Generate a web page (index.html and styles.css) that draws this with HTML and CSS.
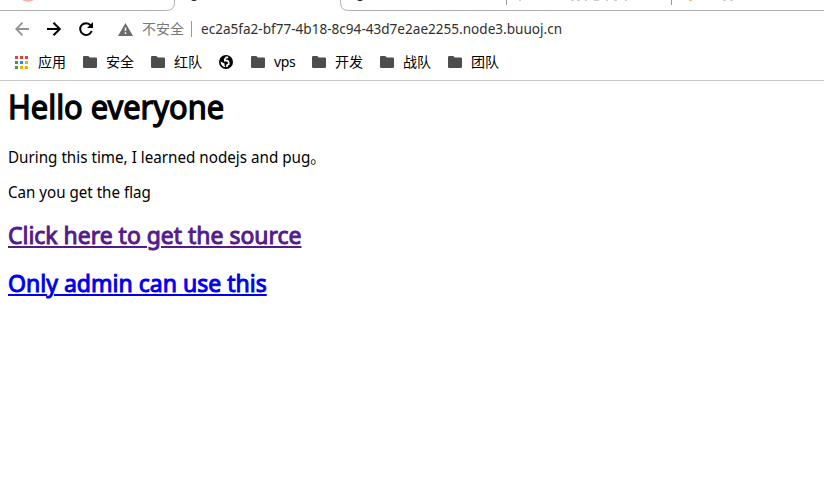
FILE: index.html
```html
<!DOCTYPE html>
<html lang="zh-CN">
<head>
<meta charset="utf-8">
<title>Hello everyone</title>
<link rel="stylesheet" href="styles.css">
</head>
<body>
<svg class="defs" width="0" height="0"><symbol id="folder" viewBox="0 0 14 12"><path d="M1.2 0H5.3L6.8 1.4H12.8Q14 1.4 14 2.6V10.8Q14 12 12.8 12H1.2Q0 12 0 10.8V1.2Q0 0 1.2 0Z" fill="#4d4d4d"/></symbol></svg>
<header class="browser">
  <svg class="tabs" width="824" height="12" viewBox="0 0 824 12">
    <path d="M0 10.5H166.500Q174.500 10.500 174.500 2.500V0M340.500 0V2.500Q340.500 10.500 348.500 10.500H824" fill="none" stroke="#b0b0b0"/>
    <path d="M506.500 0V5M671.500 0V5" stroke="#999"/>
    <path d="M22 0H34Q28 3.500 22 0Z" fill="#ffabab"/>
    <path d="M191 0H197Q194 2 191 0ZM357 0H363Q360 2 357 0Z" fill="#111"/>
    <path d="M519 .5H521M571 .5H574M577 .5H580M585 .5H587M594 .5H599M606 .5H608M614 .5H617M625 .5H627M723 .5H726M730 .5H733" stroke="#ccc"/>
    <path d="M689 .5H692" stroke="#ffc04d"/>
  </svg>
  <div class="toolbar">
    <svg class="nav back" width="14" height="14" viewBox="0 0 14 14"><path d="M14 7H1.500M7.500 .7L1.200 7L7.500 13.300"/></svg>
    <svg class="nav forward" width="14" height="14" viewBox="0 0 14 14"><path d="M0 7H12.500M6.500 .7L12.800 7L6.500 13.300"/></svg>
    <svg class="nav reload" width="14" height="14" viewBox="0 0 14 14"><path d="M11.700 3.300A5.900 5.900 0 1 0 12.700 9"/><path class="tip" d="M14 0V6H8Z"/></svg>
    <svg class="warn" width="15" height="13" viewBox="0 0 15 13"><path d="M7.500 0L15 13H0Z" fill="#6b6b6b"/><path d="M7.500 4.500V8M7.500 9.300V11" stroke="#fff" stroke-width="1.500"/></svg>
    <span class="insecure">不安全</span>
    <span class="url">ec2a5fa2-bf77-4b18-8c94-43d7e2ae2255.node3.buuoj.cn</span>
  </div>
  <nav class="bookmarks">
    <span class="mark"><svg class="apps" width="13" height="13" viewBox="0 0 13 13"><path d="M0 0h3v3H0zM5 0h3v3H5zM10 0h3v3h-3z" fill="#ee3b35"/><path d="M0 5h3v3H0zM0 10h3v3H0z" fill="#30a050"/><path d="M5 5h3v3H5z" fill="#2684fc"/><path d="M10 5h3v3h-3zM5 10h3v3H5zM10 10h3v3h-3z" fill="#f9ab00"/></svg>应用</span>
    <span class="mark"><svg width="14" height="12"><use href="#folder"/></svg>安全</span>
    <span class="mark"><svg width="14" height="12"><use href="#folder"/></svg>红队</span>
    <span class="mark globe"><svg width="14" height="14" viewBox="0 0 14 14"><circle cx="7" cy="7" r="7"/><path d="M9.200 2.400H7.300L5.800 4.300V5.700H8.600L9.700 7.300V9.200L8 10.300V12" fill="none" stroke="#fff" stroke-width="1.700"/><path d="M1.500 6.500L5.500 8.500V10.300L6.500 12.300Q2 11.500 1.500 6.500Z" fill="#fff"/></svg></span>
    <span class="mark vps"><svg width="14" height="12"><use href="#folder"/></svg>vps</span>
    <span class="mark"><svg width="14" height="12"><use href="#folder"/></svg>开发</span>
    <span class="mark"><svg width="14" height="12"><use href="#folder"/></svg>战队</span>
    <span class="mark"><svg width="14" height="12"><use href="#folder"/></svg>团队</span>
  </nav>
</header>
<main>
  <h1>Hello everyone</h1>
  <p class="intro">During this time, I learned nodejs and pug<span class="stop">。</span></p>
  <p class="question">Can you get the flag</p>
  <h2 class="source"><a href="#source">Click here to get the source</a></h2>
  <h2 class="admin"><a href="#admin">Only admin can use this</a></h2>
</main>
</body>
</html>
```
FILE: styles.css
```css
* { box-sizing: border-box; }
body {
  margin: 0;
  background: #fff;
  color: #000;
  font-family: "Noto Sans", "Noto Sans CJK SC", sans-serif;
  overflow: hidden;
}
svg { display: block; flex: none; }
.defs { position: absolute; }
.browser { height: 81px; border-bottom: 1px solid #c8c8c8; }
.toolbar {
  display: flex;
  align-items: center;
  height: 34px;
  padding-left: 15px;
  white-space: nowrap;
}
.nav { fill: none; stroke: #000; stroke-width: 2; }
.back { stroke: #929292; stroke-width: 1.800; }
.forward { margin-left: 18px; }
.reload { margin-left: 18px; }
.reload .tip { fill: #000; stroke: none; }
.warn { margin-left: 25px; }
.insecure {
  width: 50px;
  margin-left: 9px;
  border-right: 1px solid #999;
  color: #777;
  font-size: 14px;
  line-height: 16px;
}
.url {
  margin-left: 9px;
  padding-bottom: 1px;
  color: #303030;
  font-size: 14px;
  transform: scaleX(.969);
  transform-origin: left;
}
.bookmarks {
  display: flex;
  align-items: center;
  gap: 17px;
  height: 32px;
  padding-left: 15px;
  font-size: 14px;
  line-height: 20px;
}
.mark { display: flex; align-items: center; gap: 9px; white-space: nowrap; }
.apps { margin-right: 1px; }
.globe { margin-right: 1px; }
.vps { width: 44px; letter-spacing: -0.300px; }
main { padding: 5px 8px 0; }
h1, h2, p { margin: 0; white-space: nowrap; transform-origin: left; }
h1 {
  height: 61px;
  font-size: 32px;
  font-weight: 400;
  line-height: 42px;
  -webkit-text-stroke: 1.300px;
  transform: scaleX(.963);
}
p { height: 35px; font-size: 16px; line-height: 20px; transform: scaleX(.950); }
.question { height: 37px; transform: scaleX(.945); }
.stop { display: inline-block; width: 10px; }
h2 {
  height: 48px;
  font-size: 24px;
  font-weight: 400;
  line-height: 32px;
  -webkit-text-stroke: 1px;
  transform: scaleX(.956);
}
a { text-decoration-thickness: 2px; text-underline-offset: 2px; }
.source a { color: #551a8b; }
.admin { transform: scaleX(.960); }
.admin a { color: #00e; }
```
